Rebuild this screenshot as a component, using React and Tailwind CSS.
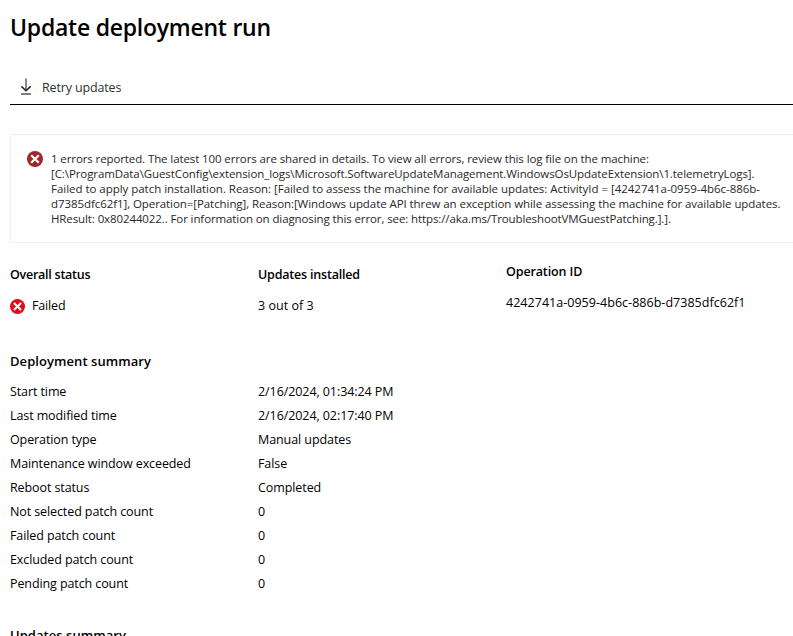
const errorLines = [
  { text: "1 errors reported. The latest 100 errors are shared in details. To view all errors, review this log file on the machine:", tracking: "tracking-[-0.105px]" },
  { text: "[C:\\ProgramData\\GuestConfig\\extension_logs\\Microsoft.SoftwareUpdateManagement.WindowsOsUpdateExtension\\1.telemetryLogs].", tracking: "tracking-[-0.09px]" },
  { text: "Failed to apply patch installation. Reason: [Failed to assess the machine for available updates: ActivityId = [4242741a-0959-4b6c-886b-", tracking: "tracking-[-0.03px]" },
  { text: "d7385dfc62f1], Operation=[Patching], Reason:[Windows update API threw an exception while assessing the machine for available updates.", tracking: "tracking-[-0.075px]" },
  { text: "HResult: 0x80244022.. For information on diagnosing this error, see: https://aka.ms/TroubleshootVMGuestPatching.].].", tracking: "tracking-[-0.105px]" },
];

const summary = [
  ["Start time", "2/16/2024, 01:34:24 PM"],
  ["Last modified time", "2/16/2024, 02:17:40 PM"],
  ["Operation type", "Manual updates"],
  ["Maintenance window exceeded", "False"],
  ["Reboot status", "Completed"],
  ["Not selected patch count", "0"],
  ["Failed patch count", "0"],
  ["Excluded patch count", "0"],
  ["Pending patch count", "0"],
];

function ErrorIcon({ className }) {
  return (
    <svg viewBox="0 0 16 16" className={className} aria-hidden="true">
      <circle cx="8" cy="8" r="8" fill="currentColor" />
      <path d="M4.2 4.2l7.6 7.6M11.8 4.2l-7.6 7.6" stroke="#fff" strokeWidth="2.2" />
    </svg>
  );
}

function DownloadIcon() {
  return (
    <svg viewBox="0 0 12 17" className="mb-[2px] h-[17px] w-3" fill="none" stroke="#222" aria-hidden="true">
      <path d="M6 0.5v12.2" stroke="#555" strokeWidth="1.4" />
      <path d="M1.4 8.4L6 12.8l4.6-4.4" strokeWidth="1.5" />
      <path d="M1 16h10" stroke="#000" />
    </svg>
  );
}

export default function App() {
  return (
    <div className="h-[636px] w-[793px] overflow-hidden bg-white pl-[10px] font-['Open_Sans','Noto_Sans',sans-serif] text-[12.5px] leading-6 tracking-[-0.08px] whitespace-nowrap text-black">
      <h1 className="pt-[11px] text-[23px] leading-8 font-semibold tracking-[-0.25px]">Update deployment run</h1>

      <div className="mt-[27px] flex h-[35px] items-center gap-[10px] border-b border-black pl-[10px]">
        <DownloadIcon />
        <button className="pt-[2px] tracking-[-0.15px] text-[#323130]">Retry updates</button>
      </div>

      <div className="mt-[29px] flex h-[109px] rounded-l-[2px] border border-r-0 border-[#fdeaed] pt-4 pl-4">
        <ErrorIcon className="h-4 w-4 shrink-0 text-[#a4262c]" />
        <div className="ml-2 text-[11.5px] leading-[15px] text-[#292827]">
          {errorLines.map((line) => (
            <p key={line.text} className={line.tracking}>{line.text}</p>
          ))}
        </div>
      </div>

      <div className="mt-5 grid h-[69px] grid-cols-[248px_248px_1fr]">
        <div>
          <h2 className="font-semibold tracking-[-0.25px]">Overall status</h2>
          <div className="mt-[7px] flex items-center gap-[7px]">
            <ErrorIcon className="mt-px h-[15px] w-[15px] text-[#e00b1c]" />
            <span className="tracking-[-0.15px]">Failed</span>
          </div>
        </div>
        <div>
          <h2 className="font-semibold tracking-[-0.2px]">Updates installed</h2>
          <p className="mt-[7px] tracking-[0.03px]">3 out of 3</p>
        </div>
        <div className="-mt-[3px]">
          <h2 className="font-semibold tracking-[-0.12px]">Operation ID</h2>
          <p className="mt-[7px] tracking-[0.03px]">4242741a-0959-4b6c-886b-d7385dfc62f1</p>
        </div>
      </div>

      <h2 className="mt-[17px] text-[13px] font-semibold tracking-[0.07px]">Deployment summary</h2>
      <dl className="mt-[7px]">
        {summary.map(([label, value]) => (
          <div key={label} className="grid h-6 grid-cols-[248px_1fr]">
            <dt className="tracking-[-0.1px]">{label}</dt>
            <dd>{value}</dd>
          </div>
        ))}
      </dl>

      <h2 className="mt-[27px] text-[13px] font-semibold tracking-[0.05px]">Updates summary</h2>
    </div>
  );
}
